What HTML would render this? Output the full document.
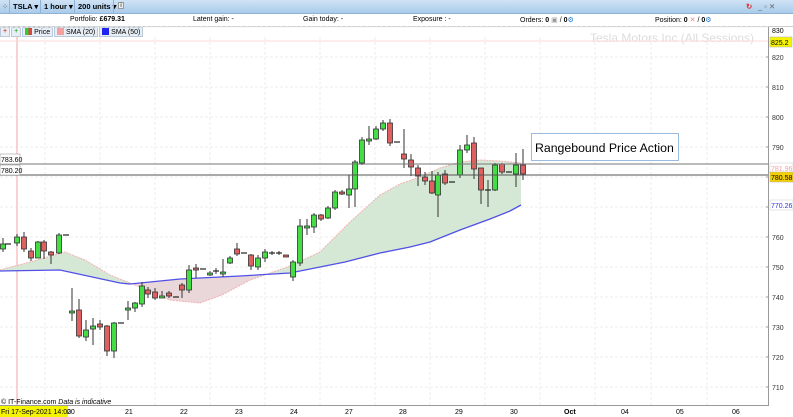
<!DOCTYPE html>
<html><head><meta charset="utf-8"><style>
*{margin:0;padding:0;box-sizing:border-box}
body{width:793px;height:417px;overflow:hidden;background:#fff;font-family:"Liberation Sans",sans-serif;font-size:8px;color:#000;position:relative}
.tb{position:absolute;left:0;top:0;width:793px;height:14px;background:linear-gradient(#cfe3f5,#a9cbea);border-bottom:1px solid #8fb3d6}
.tb span{position:absolute;top:2px;font-weight:bold;font-size:7.5px;white-space:nowrap}
.sep{position:absolute;top:0;width:1px;height:14px;background:#8fb3d6}
.row2{position:absolute;top:14px;left:0;width:793px;height:13px;background:#fff;border-bottom:1px solid #ccc}
.row2 span{position:absolute;top:2px;font-size:7px;white-space:nowrap}
.lgw{position:absolute;top:27px;left:0;display:flex;gap:1px}
.lg{height:10px;font-size:7px;background:#e8eef5;border:1px solid #b9c9da;padding:0 2px;line-height:8px;white-space:nowrap}
svg{position:absolute;left:0;top:0}
</style></head><body>
<div class="tb">
<span style="left:2px;color:#888">⁘</span>
<div class="sep" style="left:9px"></div>
<span style="left:13px">TSLA ▾</span>
<div class="sep" style="left:40px"></div>
<span style="left:44px">1 hour ▾</span>
<div class="sep" style="left:74px"></div>
<span style="left:78px">200 units ▾</span>
<div class="sep" style="left:113px"></div>
<span style="left:118px;font-weight:normal;border:1px solid #999;width:6px;height:7px;font-size:6px;line-height:6px;text-align:center;background:#eee">i</span>
<span style="left:746px;color:#d33">↻</span>
<span style="left:758px;color:#666;font-weight:normal">_ ▫ ✕</span>
</div>
<div class="row2">
<span style="left:70px">Portfolio: <b>£679.31</b></span>
<span style="left:193px">Latent gain: -</span>
<span style="left:303px">Gain today: -</span>
<span style="left:413px">Exposure : -</span>
<span style="left:520px">Orders: <b>0</b> <span style="position:static;color:#999">▣</span> / <b>0</b><span style="position:static;color:#27c">⚙</span></span>
<span style="left:655px">Position: <b>0</b> <span style="position:static;color:#e88">✕</span> / <b>0</b><span style="position:static;color:#27c">⚙</span></span>
</div>
<div class="lgw">
<div class="lg" style="color:#d00">+</div>
<div class="lg" style="color:#090">+</div>
<div class="lg"><span style="display:inline-block;width:7px;height:7px;background:linear-gradient(90deg,#3c3 50%,#d44 50%);vertical-align:-1px"></span> Price</div>
<div class="lg"><span style="display:inline-block;width:7px;height:7px;background:#f5a0a0;vertical-align:-1px"></span> SMA (20)</div>
<div class="lg"><span style="display:inline-block;width:7px;height:7px;background:#22e;vertical-align:-1px"></span> SMA (50)</div>
</div>
<svg id="s" width="793" height="417" xmlns="http://www.w3.org/2000/svg" font-family="Liberation Sans, sans-serif"></svg>
<script>
const s=document.getElementById('s');let h='';
for(let y=27;y<=387;y+=30)h+=`<line x1="0" x2="768" y1="${y}" y2="${y}" stroke="#eee" stroke-dasharray="3,2"/>`;
[45,100,155,210,265,320,375,430,485,540,595,651,707].forEach(x=>h+=`<line x1="${x}" x2="${x}" y1="37" y2="405" stroke="#eee" stroke-dasharray="3,2"/>`);
h+=`<line x1="17" x2="17" y1="37" y2="405" stroke="#f6c4c4" stroke-width="1.5"/>`;
h+=`<text x="590" y="42" font-size="12" fill="#ddd">Tesla Motors Inc (All Sessions)</text>`;
h+=`<line x1="0" x2="768" y1="41" y2="41" stroke="#fbdada"/>`;
const s50=[[0,271],[60,270],[120,283],[130,284],[180,279],[240,276],[290,273],[320,267],[345,262],[380,253],[410,247],[430,242],[460,230],[490,219],[510,211],[521,205]];
const s20=[[0,270],[30,262],[65,252],[85,260],[110,275],[130,283],[150,291],[170,300],[200,303],[222,295],[250,280],[290,266],[320,252],[350,222],[380,195],[400,184],[420,177],[440,168],[460,162],[480,160],[500,161],[521,163]];
const pp=a=>a.map(p=>p.join(',')).join(' ');
const poly=pp(s20)+' '+pp(s50.slice().reverse());
h+=`<defs><clipPath id="g1"><rect x="0" y="0" width="128" height="417"/><rect x="258" y="0" width="300" height="417"/></clipPath><clipPath id="r1"><rect x="128" y="0" width="130" height="417"/></clipPath></defs>`;
h+=`<polygon points="${poly}" fill="#d5e8d5" clip-path="url(#g1)"/>`;
h+=`<polygon points="${poly}" fill="#ead7d9" clip-path="url(#r1)"/>`;
h+=`<polyline points="${pp(s20)}" fill="none" stroke="#f3b0b0" stroke-width="1" stroke-dasharray="2,1"/>`;
h+=`<polyline points="${pp(s50)}" fill="none" stroke="#5050e8" stroke-width="1.3"/>`;
const c=[[3,244,249,238,252,'g'],[8,244,244,244,244,'d'],[17,237,243,234,246,'g'],[24,237,249,232,252,'r'],[31,251,258,248,261,'r'],[38,242,258,241,258,'g'],[44,242,251,240,259,'r'],[51,252,255,251,264,'r'],[59,235,253,233,254,'g'],[66,235,235,235,235,'d'],
[72,311,313,288,321,'g'],[79,310,336,299,338,'r'],[86,330,337,320,341,'g'],[93,326,329,318,345,'g'],[100,324,327,320,330,'r'],[107,326,351,325,356,'r'],[114,323,351,322,358,'g'],[121,323,323,323,323,'d'],
[128,308,310,301,320,'g'],[135,303,308,302,312,'g'],[142,286,304,282,307,'g'],[148,290,294,287,298,'r'],[155,292,298,288,300,'r'],[162,296,298,291,298,'g'],[169,293,296,291,298,'r'],[176,297,297,297,297,'d'],
[182,285,290,283,298,'r'],[189,270,290,265,293,'g'],[196,268,270,264,278,'r'],[203,269,269,269,269,'d'],[210,273,275,271,276,'g'],[216,271,271,268,274,'d'],[223,272,274,259,277,'g'],[230,258,263,256,264,'g'],
[237,249,254,243,256,'r'],[244,253,253,253,253,'d'],[251,255,266,254,270,'r'],[258,258,267,255,270,'g'],[265,252,258,249,262,'g'],[272,253,253,251,255,'d'],[279,253,253,251,255,'d'],[286,255,256,255,256,'r'],
[293,262,277,260,281,'g'],[300,226,263,219,266,'g'],[307,226,227,219,235,'g'],[314,215,227,213,233,'g'],[321,215,219,214,221,'r'],[328,208,218,206,219,'g'],[335,192,208,190,210,'g'],[342,192,194,190,195,'r'],
[349,189,195,175,208,'g'],[355,162,189,160,207,'g'],[362,140,163,137,165,'g'],[369,139,141,126,145,'g'],[376,129,139,126,140,'g'],[383,123,129,120,131,'g'],[390,123,143,119,146,'r'],[397,142,142,142,142,'d'],
[404,154,159,129,168,'r'],[411,160,167,154,176,'r'],[418,168,176,165,186,'r'],[425,177,181,172,185,'r'],[432,181,193,171,194,'r'],[438,175,195,172,217,'g'],[445,174,183,170,185,'r'],[452,182,182,182,182,'d'],
[460,150,175,145,178,'g'],[467,145,150,135,153,'g'],[474,143,169,137,179,'r'],[481,168,190,168,204,'r'],[488,190,190,180,207,'d'],[495,165,190,163,191,'g'],[502,164,172,163,174,'r'],[509,172,172,172,172,'d'],[516,165,174,153,187,'g'],[523,165,174,149,180,'r']];
c.forEach(([x,bt,bb,wt,wb,k])=>{
 h+=`<line x1="${x}" x2="${x}" y1="${wt}" y2="${wb}" stroke="#333"/>`;
 if(k=='d'){h+=`<line x1="${x-3}" x2="${x+3}" y1="${bt}" y2="${bt}" stroke="#222" stroke-width="1.2"/>`;}
 else h+=`<rect x="${x-2.5}" y="${bt}" width="5" height="${Math.max(bb-bt,2)}" fill="${k=='g'?'#44dd44':'#e06060'}" stroke="#333" stroke-width="0.8"/>`;
});
h+=`<line x1="0" x2="768" y1="164" y2="164" stroke="#777"/><line x1="0" x2="768" y1="175" y2="175" stroke="#555"/>`;
h+=`<rect x="0" y="154" width="20" height="10" fill="#fff" stroke="#888" stroke-width=".5"/><text x="1" y="162" font-size="7">783.60</text>`;
h+=`<rect x="0" y="165" width="20" height="10" fill="#fff" stroke="#888" stroke-width=".5"/><text x="1" y="173" font-size="7">780.20</text>`;
h+=`<rect x="531.5" y="133.5" width="147" height="27" fill="#fff" stroke="#9bbce0"/><text x="535" y="152" font-size="12.3">Rangebound Price Action</text>`;
h+=`<line x1="768.5" x2="768.5" y1="27" y2="405" stroke="#999"/>`;
for(let v=830,y=27;v>=710;v-=10,y+=30){if(v==830){h+=`<text x="772" y="${y+6}" font-size="7">830</text>`;continue;}h+=`<line x1="766" x2="769" y1="${y}" y2="${y}" stroke="#999"/><text x="772" y="${y+3}" font-size="7" fill="#333">${v}</text>`;}
h+=`<rect x="770" y="37" width="22" height="10" fill="#f4f400" stroke="#aaa" stroke-width=".5"/><text x="771" y="45" font-size="7">825.2</text>`;
h+=`<rect x="770" y="163" width="23" height="10" fill="#fff" stroke="#ccc" stroke-width=".5"/><text x="771" y="171" font-size="7" fill="#f5a0a0">781.96</text>`;
h+=`<rect x="770" y="172" width="23" height="10" fill="#f4d000" stroke="#aaa" stroke-width=".5"/><text x="771" y="180" font-size="7">780.58</text>`;
h+=`<rect x="770" y="200" width="23" height="10" fill="#fff" stroke="#ccc" stroke-width=".5"/><text x="771" y="208" font-size="7" fill="#3333dd">770.26</text>`;
h+=`<text x="1" y="404" font-size="7">© IT-Finance.com <tspan font-style="italic">Data is indicative</tspan></text>`;
h+=`<line x1="0" x2="769" y1="405.5" y2="405.5" stroke="#999"/>`;
h+=`<rect x="0" y="406" width="68" height="11" fill="#f4f400"/><text x="1" y="414" font-size="7">Fri 17-Sep-2021 14:00</text>`;
[[67,'20'],[125,'21'],[180,'22'],[235,'23'],[290,'24'],[345,'27'],[399,'28'],[455,'29'],[510,'30'],[564,'Oct'],[621,'04'],[676,'05'],[732,'06']].forEach(([x,t])=>h+=`<text x="${x}" y="414" font-size="7" ${t=='Oct'?'font-weight="bold"':''}>${t}</text>`);
s.innerHTML=h;
</script>
</body></html>
